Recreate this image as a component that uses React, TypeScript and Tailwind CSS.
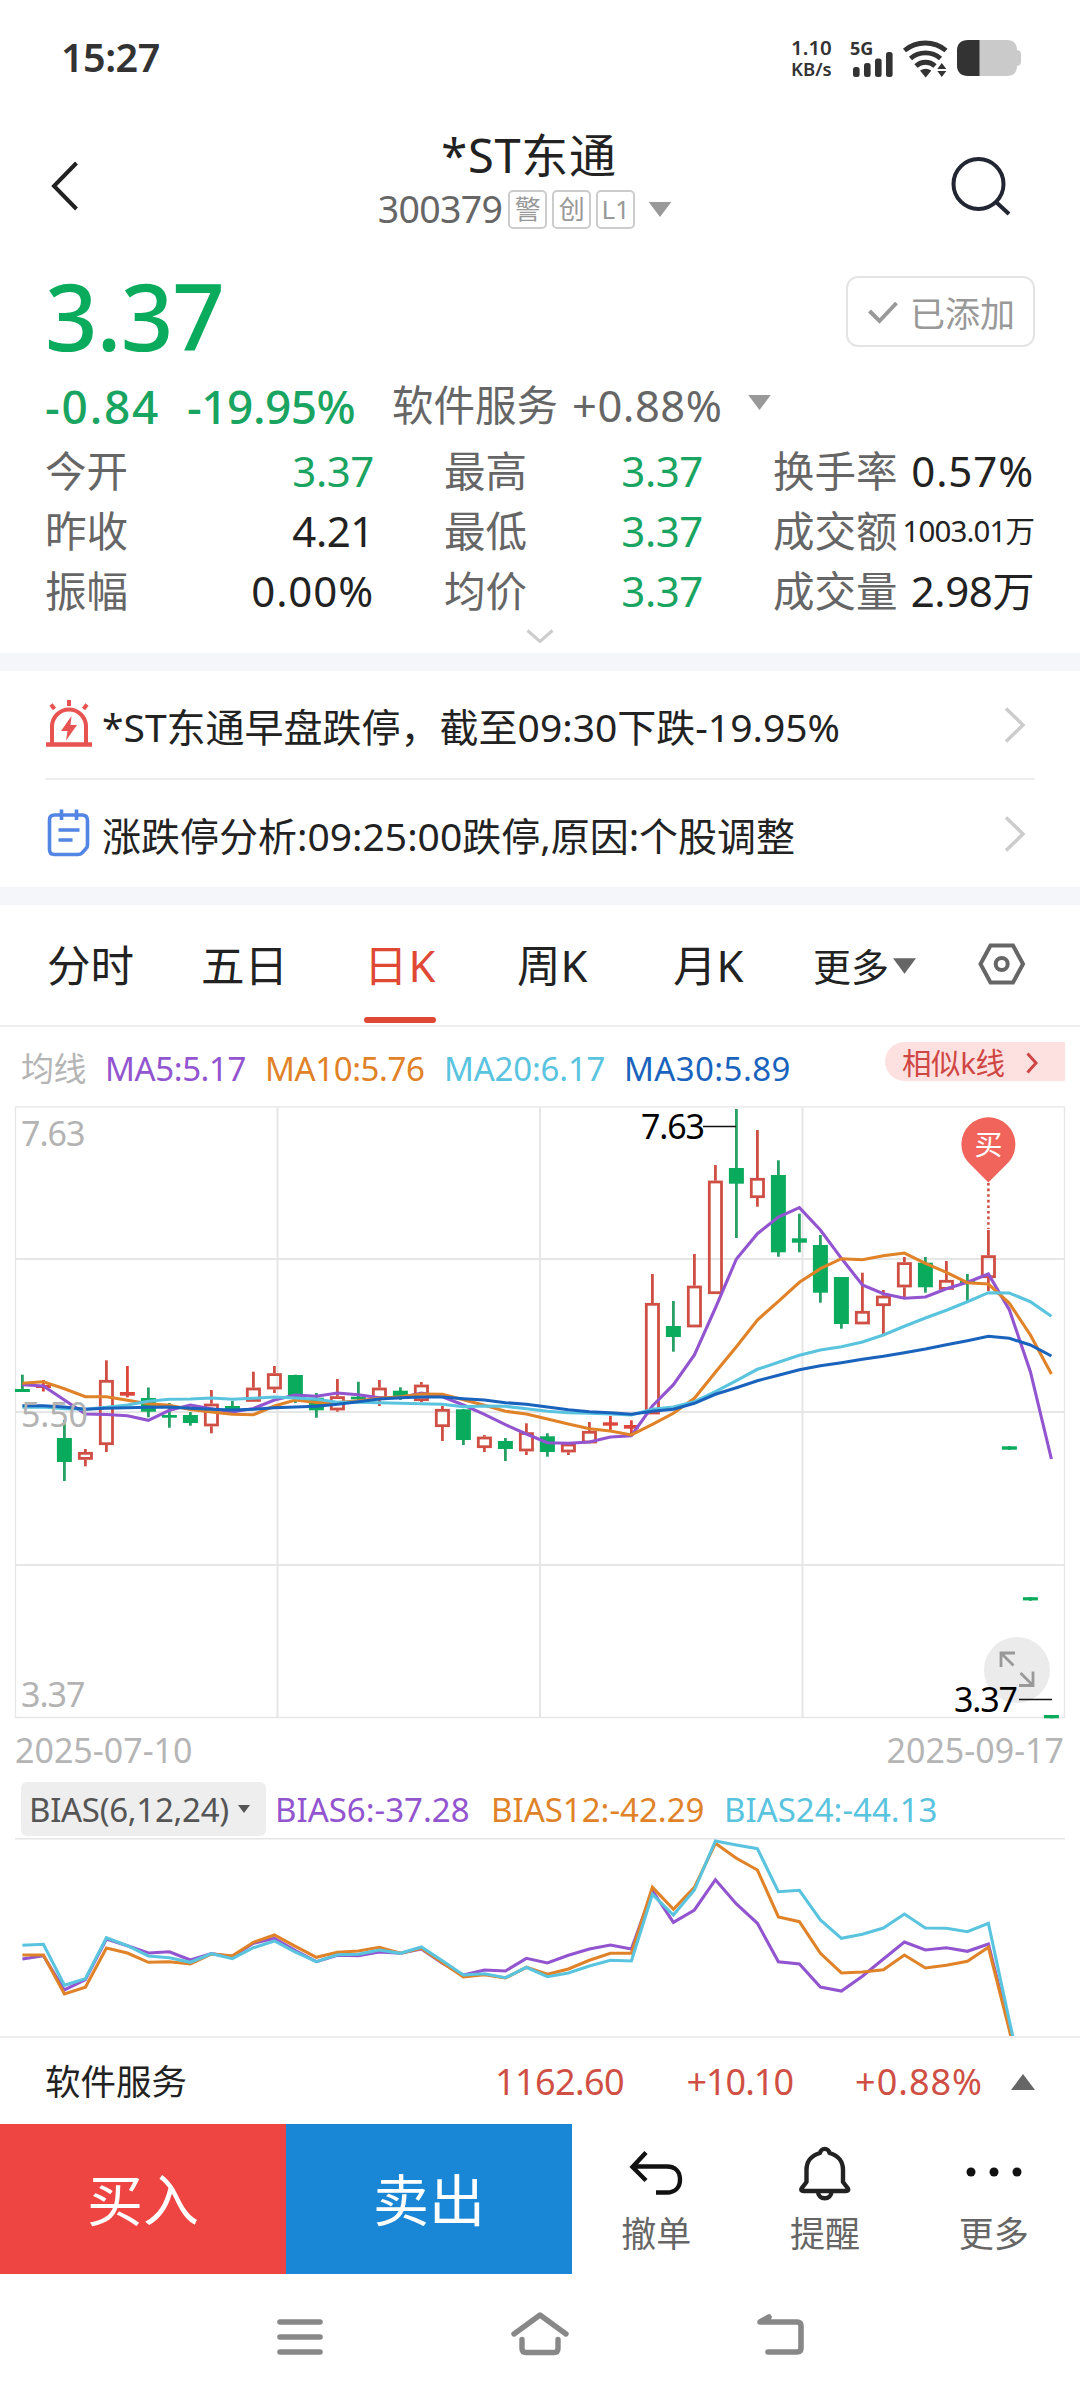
import clsx from "clsx";
import type { ReactNode } from "react";

type Side = "up" | "down";
// [side, high, bodyTop, bodyBottom, low]
type Candle = [Side, number, number, number, number];

const RED = "#cf4f44";
const GREEN = "#0aab5d";
const PURPLE = "#9254cf";
const ORANGE = "#e08228";
const CYAN = "#5ac4df";
const BLUE = "#1a63bd";

const candles: Candle[] = [
	["down", 1374.7, 1389, 1392, 1392],
	["up", 1380, 1385, 1388, 1391.5],
	["down", 1420, 1438, 1462, 1481],
	["up", 1449, 1452, 1459.7, 1466.3],
	["up", 1360.3, 1380, 1445, 1452],
	["up", 1366, 1392, 1395.7, 1397.3],
	["down", 1387.5, 1398, 1411.7, 1417.3],
	["down", 1403, 1415, 1417.7, 1427.7],
	["down", 1412, 1415, 1423, 1425.7],
	["up", 1390, 1403.7, 1426.3, 1433.3],
	["down", 1401, 1406, 1410.7, 1414.5],
	["up", 1371.7, 1387.7, 1401.7, 1401.7],
	["up", 1366, 1373.3, 1389.3, 1393],
	["down", 1374.7, 1375, 1397, 1403],
	["down", 1393, 1397.7, 1410.3, 1417.7],
	["up", 1379, 1396.3, 1410.3, 1411.7],
	["down", 1381.7, 1396.7, 1399.3, 1400],
	["up", 1380, 1387.7, 1399, 1406],
	["down", 1387.3, 1390.7, 1397.3, 1400],
	["up", 1382, 1384.7, 1401, 1402],
	["up", 1406, 1409, 1427, 1441],
	["down", 1409, 1409.3, 1440, 1445],
	["up", 1435, 1436.7, 1448, 1452],
	["down", 1438, 1441, 1449, 1461],
	["up", 1423.3, 1432.3, 1451.3, 1455],
	["down", 1433.3, 1436.3, 1452, 1456.7],
	["up", 1443, 1443.7, 1452.3, 1455],
	["up", 1422, 1431, 1443.3, 1443.3],
	["up", 1416, 1422.3, 1425.7, 1430.3],
	["up", 1420.3, 1425, 1428.7, 1434],
	["up", 1274, 1303, 1414.3, 1414.3],
	["down", 1301, 1326, 1337, 1351.7],
	["up", 1254, 1285.7, 1327.3, 1327.3],
	["up", 1165, 1180.7, 1294, 1294],
	["down", 1109, 1168, 1183.7, 1238],
	["up", 1130, 1178, 1198, 1206.7],
	["down", 1160.3, 1175, 1252.3, 1256.7],
	["down", 1213.7, 1238.3, 1242.7, 1252.3],
	["down", 1235, 1245, 1292.7, 1302.7],
	["down", 1277, 1277, 1324, 1328.7],
	["up", 1272.7, 1311, 1324.3, 1324.3],
	["up", 1290, 1295.7, 1306, 1334.7],
	["up", 1257, 1262.3, 1287.3, 1297.3],
	["down", 1257, 1262.7, 1287.3, 1292.7],
	["up", 1261, 1280, 1289.7, 1290],
	["down", 1274, 1281, 1283.5, 1301],
	["up", 1230, 1255.3, 1278, 1291],
	["down", 1446, 1446.3, 1449.7, 1450],
	["down", 1597, 1597.2, 1600.4, 1600.8],
	["down", 1715, 1715, 1718.3, 1718.3],
];

const ma5 = [
	1384.7, 1386, 1400, 1414, 1414.5, 1415.7, 1420.3, 1410.3, 1405, 1408.7,
	1412, 1408.5, 1400, 1395, 1396.3, 1393, 1394.7, 1397.7, 1397.7, 1393,
	1396.7, 1405, 1414.3, 1424.7, 1434, 1442.7, 1443.3, 1442, 1437, 1435.7,
	1406, 1384.7, 1355, 1308, 1259, 1233.7, 1217, 1207.7, 1230, 1258.3,
	1285, 1293.7, 1298.3, 1297, 1288.7, 1282.3, 1274, 1310, 1371.7, 1459,
];
const ma10 = [
	1383.3, 1381.7, 1388.7, 1396.7, 1396.7, 1400.3, 1403.7, 1405.3, 1409.5, 1412,
	1414.3, 1414.7, 1406, 1400, 1402.5, 1402.5, 1400.7, 1398.3, 1396.7, 1394,
	1394.3, 1399.7, 1405.3, 1411.3, 1414, 1419, 1424, 1428.7, 1431, 1435,
	1424.3, 1413.3, 1398.3, 1372.3, 1346.7, 1320, 1301.3, 1282.3, 1268.7, 1258.7,
	1259.7, 1255.7, 1253, 1263.3, 1272.3, 1282.7, 1284, 1303.3, 1335, 1374,
];
const ma20 = [
	1407.3, 1407, 1408.7, 1409.3, 1407.3, 1405, 1401.3, 1399.3, 1399, 1398,
	1399.3, 1398.3, 1397, 1398, 1399.3, 1402.2, 1402.3, 1402.7, 1403.3, 1403.7,
	1404.3, 1406.7, 1406, 1406.3, 1408.7, 1411.3, 1412.7, 1413.3, 1414, 1415,
	1409.3, 1407, 1401.7, 1391.7, 1380.7, 1369.3, 1362.3, 1355.3, 1350, 1346.7,
	1342, 1335, 1326.3, 1318, 1310.3, 1301.7, 1292.7, 1293, 1301.7, 1316.3,
];
const ma30 = [
	1405.7, 1405.7, 1407, 1409.3, 1408.3, 1407.7, 1407.3, 1407, 1408.3, 1409.3,
	1410, 1409.3, 1407.7, 1407, 1406.3, 1404.3, 1401.7, 1399, 1397.7, 1397,
	1397, 1398.7, 1400, 1402.7, 1404.3, 1407, 1409.7, 1411.7, 1412.7, 1414.3,
	1411.3, 1409.3, 1403.3, 1394.3, 1387.7, 1380.7, 1375.3, 1369.7, 1365.7, 1362.7,
	1359.3, 1356.3, 1352.7, 1349, 1344.7, 1340.7, 1336.3, 1338.3, 1345, 1356,
];

const bias6 = [
	1959, 1955.7, 1990, 1979.7, 1939, 1945.7, 1953, 1951.7, 1960, 1953.7,
	1956.7, 1943.3, 1938.3, 1950.7, 1961.7, 1955.3, 1955.7, 1952, 1953.3, 1949,
	1963.3, 1975, 1970, 1971, 1958.3, 1963, 1955.3, 1949, 1945, 1949,
	1890.7, 1922.3, 1910, 1879.7, 1904, 1923.3, 1961.7, 1964, 1987, 1991,
	1976.3, 1959, 1942, 1950, 1947.7, 1951.3, 1944, 2028, 2120,
];
const bias12 = [
	1955, 1955, 1994, 1987.3, 1948, 1953, 1962.3, 1961.7, 1964, 1954,
	1955.7, 1942.3, 1935, 1946.3, 1957.3, 1952.3, 1951, 1947.3, 1953.3, 1948.3,
	1962.7, 1977, 1974.7, 1978, 1967.3, 1974.3, 1969, 1960.3, 1953.3, 1953.3,
	1887.3, 1909.3, 1887.3, 1843.3, 1858.3, 1870, 1917, 1921.7, 1953.3, 1973,
	1972, 1969.7, 1955, 1968, 1965.3, 1961.3, 1947.3, 2030, 2125,
];
const bias24 = [
	1945.3, 1944.3, 1985.3, 1978.7, 1937.7, 1945.7, 1956, 1957.7, 1962.3, 1953.7,
	1958.7, 1947.7, 1941, 1952, 1961.7, 1954.7, 1954.3, 1950, 1953.3, 1947,
	1960.7, 1975, 1973.7, 1977.7, 1967.3, 1976.7, 1973, 1966, 1960.3, 1961,
	1894.3, 1915, 1890, 1841, 1845, 1848.7, 1891.7, 1890.3, 1920, 1938.3,
	1934.3, 1928, 1914, 1928, 1928.3, 1931.7, 1923.3, 2021, 2115,
];

const xAt = (i: number) => 22.4 + i * 21;

const toPoints = (ys: number[]) =>
	ys.map((y, i) => `${xAt(i)},${y}`).join(" ");

function Line({ ys, color }: { ys: number[]; color: string }) {
	return (
		<polyline points={toPoints(ys)} fill="none" stroke={color} strokeWidth={3.1} />
	);
}

function CandleMark({ x, candle }: { x: number; candle: Candle }) {
	const [side, high, top, bottom, low] = candle;
	const height = bottom - top;
	if (side === "down") {
		return (
			<g>
				<rect x={x - 1.4} y={high} width={2.8} height={low - high} fill="#27a065" />
				<rect x={x - 7.5} y={top} width={15} height={height} fill={GREEN} />
			</g>
		);
	}
	if (height < 5) {
		return (
			<g fill="#dc463a">
				<rect x={x - 1.4} y={high} width={2.8} height={low - high} />
				<rect x={x - 7.5} y={top} width={15} height={height} />
			</g>
		);
	}
	return (
		<g>
			<rect x={x - 1.4} y={high} width={2.8} height={top - high} fill={RED} />
			<rect x={x - 1.4} y={bottom} width={2.8} height={low - bottom} fill={RED} />
			<rect
				x={x - 6.1}
				y={top + 1.3}
				width={12.2}
				height={height - 2.6}
				fill="none"
				stroke={RED}
				strokeWidth={2.8}
			/>
		</g>
	);
}

function Triangle({ className, up }: { className?: string; up?: boolean }) {
	return (
		<svg viewBox="0 0 24 16" className={className} fill="currentColor">
			<path d={up ? "M12 0 24 16H0Z" : "M0 0h24L12 16Z"} />
		</svg>
	);
}

function StatusBar() {
	return (
		<div className="flex h-[116px] items-start text-[#333]">
			<div className="ml-[61px] mt-[37px] w-[730px] text-[39.5px] leading-[40px] font-semibold tracking-[-0.5px]">
				15:27
			</div>
			<div className="mt-[36px] w-[57px] text-[20.5px] leading-[22px] font-semibold">
				<div>1.10</div>
				<div className="text-[18.5px]">KB/s</div>
			</div>
			<svg width="174" height="46" viewBox="848 34 174 46" className="mt-[34px]" fill="#333">
				<text x="850" y="55" fontSize="18" fontWeight="700">5G</text>
				<rect x="853" y="67" width="6.6" height="10" rx="2.5" />
				<rect x="864" y="63" width="6.6" height="14" rx="2.5" />
				<rect x="875" y="58.5" width="6.6" height="18.5" rx="2.5" />
				<rect x="886" y="52" width="6.6" height="25" rx="2.5" />
				<g fill="none" stroke="#333" strokeWidth="4.8">
					<path d="M904.5 50.500c12-10 29.500-10 41.500 0" />
					<path d="M910.5 58.500c8.500-7.500 21.500-7.500 30 0" />
					<path d="M916 66c5.500-5 13.500-5 19 0" />
				</g>
				<path d="M920 70.500q5.700-3.500 11.400 0l-5.700 7Z" />
				<path d="m941.800 63 4.500 6h-9Zm0 14 4.500-6h-9Z" />
				<path d="M968 40h39c7 0 10 4 10 10 3 .5 4 2 4 4v8c0 2-1 3.500-4 4 0 6-3 10-10 10h-39Z" fill="#cacaca" />
				<path d="M979.500 40v36H968c-7 0-11-4-11-10V50c0-6 4-10 11-10Z" />
			</svg>
		</div>
	);
}

function Tag({ children }: { children: ReactNode }) {
	return (
		<span className="flex h-[39px] w-[39px] items-center justify-center rounded-[5px] border-2 border-[#ccc] text-[26px] leading-none text-[#999]">
			{children}
		</span>
	);
}

function Header() {
	return (
		<div className="flex h-[142px] items-start">
			<svg width="80" height="60" viewBox="0 0 80 60" className="mt-[40px] ml-[40px]" fill="none" stroke="#222" strokeWidth="4">
				<path d="M36.500 7 14 30l22.500 23" />
			</svg>
			<div className="mt-[12px] flex flex-1 flex-col items-center pr-5">
				<div className="ml-2 h-[52px] text-[47px] leading-[54px] tracking-[0.7px] text-[#222]">*ST东通</div>
				<div className="mt-[8px] flex h-[42px] items-center">
					<span className="mr-[6px] text-[37.5px] leading-[42px] tracking-[-0.7px] text-[#666]">300379</span>
					<div className="flex gap-[5px]">
						<Tag>警</Tag>
						<Tag>创</Tag>
						<Tag>L1</Tag>
					</div>
					<Triangle className="ml-[13px] h-[15px] w-[24px] text-[#999]" />
				</div>
			</div>
			<svg width="64" height="64" viewBox="950 154 64 64" className="mt-[38px] mr-[66px]" fill="none" stroke="#222632" strokeWidth="4">
				<circle cx="978.5" cy="184" r="25" />
				<path d="m996 202 13 12" />
			</svg>
		</div>
	);
}

function Quote() {
	return (
		<div className="h-[395px] pl-[45px] pr-[45px]">
			<div className="flex h-[112px] items-start justify-between">
				<div className="mt-[8px] text-[92px] leading-[100px] font-medium tracking-[-1px] text-[#0aab5d]">3.37</div>
				<div className="mt-[18px] flex h-[71px] w-[189px] items-center rounded-[12px] border-2 border-[#e4e4e4] pl-[20px] text-[35px] leading-none text-[#999]">
					<svg width="30" height="24" viewBox="0 0 30 24" className="mr-[12px]" fill="none" stroke="#999" strokeWidth="4">
						<path d="m1.500 11 10 10L28.500 3" />
					</svg>
					<span className="pt-[3px]">已添加</span>
				</div>
			</div>
			<div className="flex h-[71px] items-center leading-none">
				<span className="w-[142px] text-[46px] font-medium tracking-[1.8px] text-[#1aa461]">-0.84</span>
				<span className="w-[205px] text-[46px] font-medium tracking-[-0.5px] text-[#1aa461]">-19.95%</span>
				<span className="w-[180px] text-[41.5px] text-[#666]">软件服务</span>
				<span className="w-[176px] text-[43.5px] tracking-[0.5px] text-[#666]">+0.88%</span>
				<Triangle className="-mt-[6px] h-[15px] w-[23px] text-[#999]" />
			</div>
			<div className="grid grid-cols-[329px_259px_261px] gap-x-[70px] text-[41.5px] leading-[60px]">
				<QuoteColumn
					rows={[
						["今开", "3.37", true],
						["昨收", "4.21", false],
						["振幅", "0.00%", false],
					]}
				/>
				<QuoteColumn
					rows={[
						["最高", "3.37", true],
						["最低", "3.37", true],
						["均价", "3.37", true],
					]}
				/>
				<QuoteColumn
					rows={[
						["换手率", "0.57%", false],
						["成交额", "1003.01万", false],
						["成交量", "2.98万", false],
					]}
				/>
			</div>
			<svg width="28" height="14" viewBox="0 0 28 14" className="mx-auto mt-[8px]" fill="none" stroke="#ccc" strokeWidth="3">
				<path d="m1.500 1.500 12.500 11 12.500-11" />
			</svg>
		</div>
	);
}

function QuoteColumn({ rows }: { rows: [string, string, boolean][] }) {
	return (
		<div>
			{rows.map(([label, value, isDown]) => (
				<div key={label} className="flex h-[60px] items-center justify-between whitespace-nowrap">
					<span className="text-[#666]">{label}</span>
					<span
						className={clsx(
							isDown ? "text-[#1aa461]" : "text-[#222]",
							value.length > 6
								? "text-[29.5px] tracking-[-0.9px]"
								: "text-[42px]",
							value.endsWith("%") && "tracking-[0.9px]",
							value.length < 6 && !value.endsWith("%") && "tracking-[-0.4px]",
						)}
					>
						{value}
					</span>
				</div>
			))}
		</div>
	);
}

function NewsRow({ icon, children }: { icon: ReactNode; children: ReactNode }) {
	return (
		<div className="flex flex-1 items-center text-[39px] leading-none text-[#222]">
			<span className="w-[57px]">{icon}</span>
			<span className="flex-1 pt-[3px] whitespace-nowrap">{children}</span>
			<svg width="22" height="36" viewBox="0 0 22 36" className="mr-[9px]" fill="none" stroke="#ccc" strokeWidth="3.5">
				<path d="m2 1.500 17 16.500L2 34.500" />
			</svg>
		</div>
	);
}

function News() {
	return (
		<div className="flex h-[252px] flex-col border-y-[18px] border-[#f5f6f9] box-border px-[45px]">
			<NewsRow
				icon={
					<svg width="48" height="48" viewBox="45 700 48 48" className="-mt-[3px]" fill="none" stroke="#e65350" strokeWidth="4">
						<path d="M52 745v-17.500a17 17 0 0 1 34 0V745" />
						<path d="M46 745.500h46" strokeWidth="4.500" />
						<path d="M69 701v6M51 705.500l3.500 4.500M87 705.500l-3.500 4.500" />
						<path d="m71.500 717-10.500 15h6.500L66 741.500l11-15.500h-6.500Z" fill="#e65350" stroke="none" />
					</svg>
				}
			>
				*ST东通早盘跌停，截至09:30下跌-19.95%
			</NewsRow>
			<div className="h-[2px] bg-[#eee]" />
			<NewsRow
				icon={
					<svg width="48" height="48" viewBox="45 811 48 48" className="-mt-[2px]" fill="none" stroke="#5285e4" strokeWidth="3.6">
						<path d="M54.500 817H82q5.500 0 5.500 5.500V847q0 2-1.500 3.500l-4 4.500q-1.500 1.500-4 1.500H54.500q-5 0-5-5V822q0-5 5-5Z" />
						<path d="M61.500 811.500V822M76.500 811.500V822M58.500 832h21M58.500 842h14" />
					</svg>
				}
			>
				涨跌停分析:09:25:00跌停,原因:个股调整
			</NewsRow>
		</div>
	);
}

function Tabs() {
	return (
		<div className="grid h-[122px] grid-cols-[154px_163px_153px_156px_140px_165px_auto] items-center border-b-2 border-[#eee] pl-[47px] text-[43.5px] leading-none text-[#222]">
			<span className="pt-[2px]">分时</span>
			<span className="pt-[2px]">五日</span>
			<span className="relative pt-[2px] tracking-[1px] text-[#de4835]">
				日K
				<i className="absolute top-[75px] left-0 h-[6px] w-[72px] rounded-full bg-[#de4835]" />
			</span>
			<span className="pt-[2px]">周K</span>
			<span className="pt-[2px]">月K</span>
			<span className="flex items-center pt-[2px] text-[38px]">
				更多
				<Triangle className="ml-[4px] h-[16px] w-[23px] text-[#666]" />
			</span>
			<svg width="48" height="42" viewBox="0 0 48 42" className="-mt-[2px]" fill="none" stroke="#666" strokeWidth="4">
				<path d="M12.500 2.500h22.500L45 21 35 39.500H12.500L2.500 21Z" />
				<circle cx="23.7" cy="21" r="6" />
			</svg>
		</div>
	);
}

function MaLegend() {
	return (
		<div className="flex h-[79px] items-center pt-[4px] pl-[21px] text-[33px] leading-none tracking-[-0.4px]">
			<span className="w-[84px] text-[#b5b5b5]">均线</span>
			<span className="w-[160px] text-[#9254cf]">MA5:5.17</span>
			<span className="w-[179px] text-[#e08228]">MA10:5.76</span>
			<span className="w-[180px] text-[#5ac4df] tracking-[-0.2px]">MA20:6.17</span>
			<span className="w-[261px] text-[#1a63bd] tracking-[0.4px]">MA30:5.89</span>
			<span className="-mt-[15px] flex h-[39px] w-[180px] items-center rounded-l-full bg-[#fde1e1] pl-[17px] text-[29.5px] text-[#cf4744]">
				<span className="pt-[4px]">相似k线</span>
				<svg width="12" height="22" viewBox="0 0 12 22" className="mt-[3px] ml-[21px]" fill="none" stroke="currentColor" strokeWidth="3">
					<path d="m1.500 1.500 8.500 9.500-8.500 9.500" />
				</svg>
			</span>
		</div>
	);
}

function KChart() {
	return (
		<svg width="1080" height="614" viewBox="0 1106 1080 614" className="block">
			<g stroke="#e6e6e6" strokeWidth="1.3" fill="none">
				<path d="M15.500 1106.800h1049v610.700h-1049Z" />
				<path d="M15.500 1259h1049M15.500 1412h1049M15.500 1565h1049M277.500 1107v610M540 1107v610M802.500 1107v610" strokeWidth="2" />
			</g>
			{candles.map((candle, i) => (
				<CandleMark key={i} x={xAt(i)} candle={candle} />
			))}
			<Line ys={ma5} color={PURPLE} />
			<Line ys={ma10} color={ORANGE} />
			<Line ys={ma20} color={CYAN} />
			<Line ys={ma30} color={BLUE} />
			<g fill="#b3b3b3" fontSize="34" letterSpacing="-1">
				<text x="21" y="1146">7.63</text>
				<text x="21" y="1427" letterSpacing="-0.2">5.50</text>
				<text x="21" y="1707">3.37</text>
			</g>
			{/* buy point marker */}
			<path d="M988.400 1182.500 968 1162a27 27 0 1 1 40.800 0Z" fill="#f0645b" />
			<text x="988.4" y="1155" fontSize="28" textAnchor="middle" fill="#fff">买</text>
			<path d="M988.400 1183v46" stroke={RED} strokeWidth="2.6" strokeDasharray="2.6 3" />
			{/* expand button */}
			<circle cx="1017" cy="1670" r="33" fill="#ebebeb" />
			<path d="M1001 1667v-14h14M1001.500 1653.500l12 12M1019 1685.500h14v-14M1032.500 1685l-12-12" fill="none" stroke="#999" strokeWidth="2.8" />
			<g fontSize="34" letterSpacing="-1.2">
				<text x="641" y="1139">7.63</text>
				<text x="954" y="1712">3.37</text>
			</g>
			<path d="M703 1126.500h33M1019 1699.500h33" stroke="#111" strokeWidth="1.6" />
		</svg>
	);
}

function BiasPanel() {
	return (
		<>
			<div className="flex h-[57px] items-center justify-between pt-[2px] pl-[15px] pr-[16px] text-[34px] leading-none text-[#b5b5b5]">
				<span>2025-07-10</span>
				<span>2025-09-17</span>
			</div>
			<div className="flex h-[61px] items-center pt-[3px] pl-[21px] text-[33px] leading-none">
				<span className="flex h-[54px] w-[245px] items-center rounded-[6px] bg-[#eee] pl-[8px] tracking-[-0.3px] text-[#555]">
					BIAS(6,12,24)
					<Triangle className="ml-[9px] h-[8px] w-[12px]" />
				</span>
				<span className="ml-[9px] w-[216px] text-[#9254cf]">BIAS6:-37.28</span>
				<span className="w-[233px] text-[#e08228]">BIAS12:-42.29</span>
				<span className="text-[#5ac4df]">BIAS24:-44.13</span>
			</div>
			<svg width="1080" height="198" viewBox="0 1838 1080 198" className="block">
				<path d="M15 1838.500h1050" stroke="#e6e6e6" strokeWidth="2" />
				<Line ys={bias6} color={PURPLE} />
				<Line ys={bias12} color={ORANGE} />
				<Line ys={bias24} color={CYAN} />
			</svg>
		</>
	);
}

function SectorBar() {
	return (
		<div className="flex h-[88px] items-center border-t-2 border-[#eee] pt-[1px] pl-[45px] text-[36px] leading-none text-[#cf4f44]">
			<span className="w-[379px] text-[35.5px] text-[#222]">软件服务</span>
			<span className="w-[200px] text-right tracking-[-0.6px]">1162.60</span>
			<span className="w-[169px] text-right tracking-[-1px]">+10.10</span>
			<span className="w-[190px] text-right tracking-[1px]">+0.88%</span>
			<Triangle up className="ml-[28px] h-[16px] w-[24px] text-[#666]" />
		</div>
	);
}

function Action({ label, icon }: { label: string; icon: ReactNode }) {
	return (
		<div className="flex flex-1 flex-col items-center text-[35px] leading-none text-[#666]">
			<div className="mt-[18px] flex h-[62px] items-center">{icon}</div>
			<span className="mt-[12px]">{label}</span>
		</div>
	);
}

function TradeBar() {
	return (
		<div className="flex h-[150px]">
			<button className="w-[286px] bg-[#ee4442] text-[56px] leading-none text-white">买入</button>
			<button className="w-[286px] bg-[#1a86d6] text-[56px] leading-none text-white">卖出</button>
			<div className="flex flex-1 pr-[2px]">
				<Action
					label="撤单"
					icon={
						<svg width="54" height="46" viewBox="629 2149 54 46" fill="none" stroke="#111" strokeWidth="4.4">
							<path d="m646 2151.500-13.500 14.500 13.500 13.500M633 2165.500h34c8 0 13 5 13 13s-5 13-13 13h-11" />
						</svg>
					}
				/>
				<Action
					label="提醒"
					icon={
						<svg width="54" height="56" viewBox="798 2145 54 56" fill="none" stroke="#222" strokeWidth="4.4" strokeLinejoin="round">
							<path d="M820 2153a4.800 4.800 0 0 1 9.500 0c9 2.500 13.500 9 13.500 17v12l5 6.500q1 2.500-2 2.500h-42.500q-3 0-2-2.500l5-6.500v-12c0-8 4.500-14.500 13.500-17Z" />
							<path d="M818 2191.500c0 9 13.500 9 13.500 0" />
						</svg>
					}
				/>
				<Action
					label="更多"
					icon={
						<svg width="56" height="12" viewBox="0 0 56 12" fill="#111">
							<circle cx="5" cy="5" r="4.5" />
							<circle cx="28" cy="5" r="4.5" />
							<circle cx="51" cy="5" r="4.5" />
						</svg>
					}
				/>
			</div>
		</div>
	);
}

function SystemNav() {
	return (
		<div className="flex h-[126px] items-start pt-[36px]">
			<svg width="50" height="48" viewBox="275 2310 50 48" className="ml-[275px]" stroke="#888" strokeWidth="5.6" strokeLinecap="round">
				<path d="M280 2322h40M280 2337h40M280 2352h40" />
			</svg>
			<svg width="62" height="48" viewBox="509 2310 62 48" className="ml-[184px]" fill="none" stroke="#888" strokeWidth="5.4" strokeLinecap="round" strokeLinejoin="round">
				<path d="m514 2334 26-19 26 19M522 2339.500v9q0 4 4 4h28q4 0 4-4v-9" />
			</svg>
			<svg width="52" height="48" viewBox="754 2310 52 48" className="ml-[183px]" fill="none" stroke="#888" strokeWidth="5.6" strokeLinecap="round" strokeLinejoin="round">
				<path d="M768 2352h29q4 0 4-4v-22q0-4-4-4h-37l9-5" />
			</svg>
		</div>
	);
}

export default function App() {
	return (
		<div className="h-[2400px] w-[1080px] overflow-hidden bg-white font-['Noto_Sans','Noto_Sans_CJK_SC',sans-serif]">
			<StatusBar />
			<Header />
			<Quote />
			<News />
			<Tabs />
			<MaLegend />
			<KChart />
			<BiasPanel />
			<SectorBar />
			<TradeBar />
			<SystemNav />
		</div>
	);
}
